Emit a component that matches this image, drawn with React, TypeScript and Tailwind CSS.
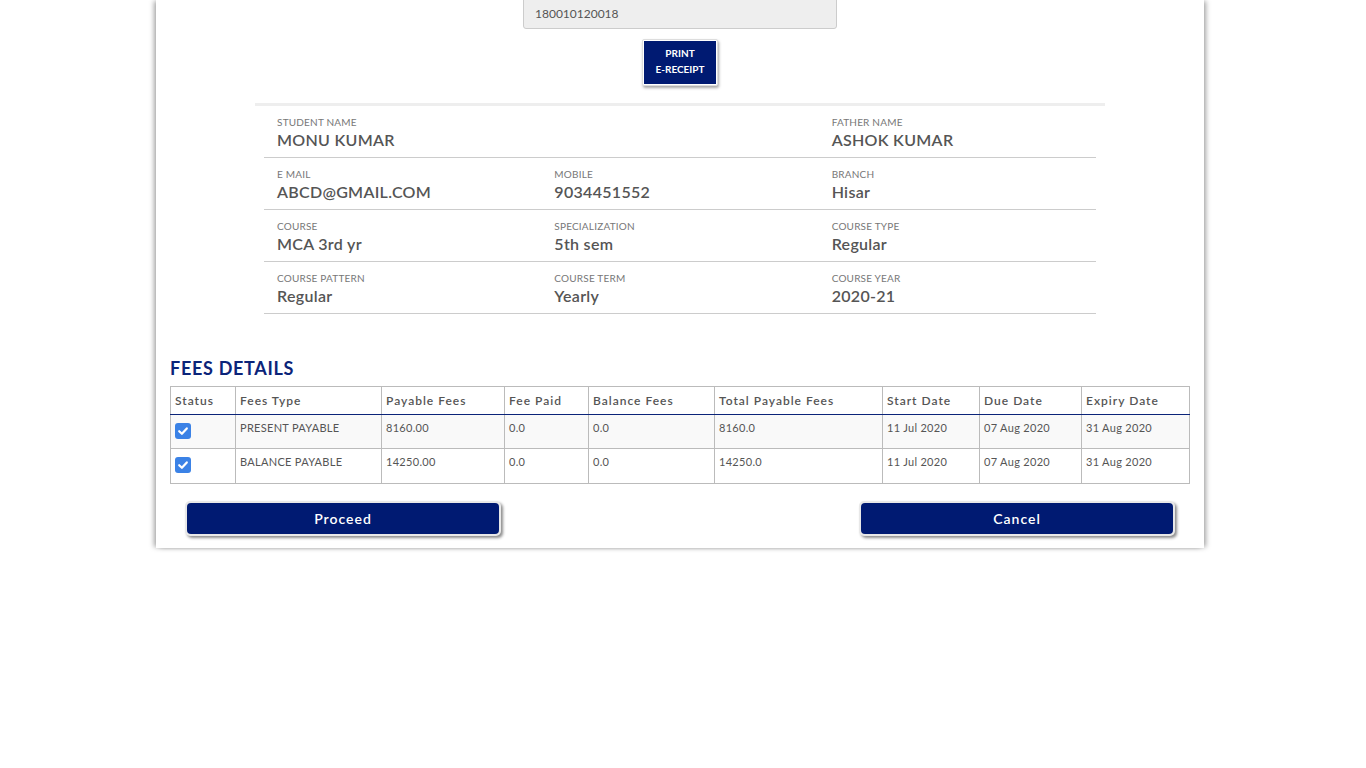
import React from "react";

const font = { fontFamily: "Lato, 'Open Sans', 'Liberation Sans', sans-serif" };

function Field({ label, value }: { label: string; value: string }) {
  return (
    <div className="pl-[13px] pt-[10px] pb-[6px]">
      <div className="text-[10px] leading-[13px] text-[#777] uppercase tracking-[0.2px]">{label}</div>
      <div className="text-[16px] leading-[22px] font-semibold text-[#555] tracking-[0.3px]">{value}</div>
    </div>
  );
}

function Check() {
  return (
    <span className="flex w-[16px] h-[16px] rounded-[3px] bg-[#3b82e6] items-center justify-center">
      <svg width="12" height="12" viewBox="0 0 12 12">
        <path d="M2.2 6.2 L4.9 8.8 L9.8 3.4" fill="none" stroke="white" strokeWidth="2.2" strokeLinecap="round" strokeLinejoin="round" />
      </svg>
    </span>
  );
}

const cols = [65, 146, 123, 84, 126, 168, 97, 102, 108];
const heads = ["Status", "Fees Type", "Payable Fees", "Fee Paid", "Balance Fees", "Total Payable Fees", "Start Date", "Due Date", "Expiry Date"];
const rows = [
  ["PRESENT PAYABLE", "8160.00", "0.0", "0.0", "8160.0", "11 Jul 2020", "07 Aug 2020", "31 Aug 2020"],
  ["BALANCE PAYABLE", "14250.00", "0.0", "0.0", "14250.0", "11 Jul 2020", "07 Aug 2020", "31 Aug 2020"],
];

export default function App() {
  return (
    <div className="min-h-[768px] bg-white overflow-hidden" style={font}>
      <div className="ml-[156px] w-[1048px] bg-white shadow-[-3px_0_5px_-1px_rgba(0,0,0,0.35),3px_0_5px_-1px_rgba(0,0,0,0.35)] px-[14px] pb-[12px]">
        <div className="flex flex-col items-center">
          <div className="-mt-[6px] w-[314px] h-[35px] rounded-[3px] border border-[#ccc] bg-[#eeeeee] flex items-center pl-[11px] pt-[5px] text-[12px] text-[#555]">
            180010120018
          </div>
          <button className="mt-[10px] w-[76px] h-[47px] bg-white border border-[#ddd] rounded-[2px] shadow-[1px_2px_3px_rgba(0,0,0,0.35)] p-[1px] flex">
            <span className="flex-1 bg-[#001a72] flex flex-col items-center justify-start pt-[4px] text-white text-[10px] font-bold leading-[16px]">
              <span>PRINT</span>
              <span>E-RECEIPT</span>
            </span>
          </button>
        </div>

        <div className="mt-[17px] mx-[85px] border-t-[3px] border-[#eeeeee]">
          <div className="mx-[9px]">
            <div className="grid grid-cols-3 border-b border-[#cccccc]">
              <Field label="Student Name" value="MONU KUMAR" />
              <div />
              <Field label="Father Name" value="ASHOK KUMAR" />
            </div>
            <div className="grid grid-cols-3 border-b border-[#cccccc]">
              <Field label="E Mail" value="ABCD@GMAIL.COM" />
              <Field label="Mobile" value="9034451552" />
              <Field label="Branch" value="Hisar" />
            </div>
            <div className="grid grid-cols-3 border-b border-[#cccccc]">
              <Field label="Course" value="MCA 3rd yr" />
              <Field label="Specialization" value="5th sem" />
              <Field label="Course Type" value="Regular" />
            </div>
            <div className="grid grid-cols-3 border-b border-[#cccccc]">
              <Field label="Course Pattern" value="Regular" />
              <Field label="Course Term" value="Yearly" />
              <Field label="Course Year" value="2020-21" />
            </div>
          </div>
        </div>

        <div className="mt-[43px] text-[18px] leading-[22px] font-bold text-[#0b2479] tracking-[0.7px]">FEES DETAILS</div>

        <table className="mt-[7px] border-collapse w-[1020px] table-fixed">
          <colgroup>
            {cols.map((w, i) => (
              <col key={i} style={{ width: w }} />
            ))}
          </colgroup>
          <thead>
            <tr className="h-[28px]">
              {heads.map((h) => (
                <th key={h} className="border border-[#bbbbbb] border-b-[#0b2479] text-left pl-[4px] text-[12px] font-semibold text-[#555] tracking-[1px]">
                  {h}
                </th>
              ))}
            </tr>
          </thead>
          <tbody>
            {rows.map((r, ri) => (
              <tr key={ri} className={ri === 0 ? "bg-[#f9f9f9] h-[34px]" : "bg-white h-[35px]"}>
                <td className="border border-[#bbbbbb] align-top pl-[4px]">
                  <div className="pt-[8px]">
                    <Check />
                  </div>
                </td>
                {r.map((c, ci) => (
                  <td key={ci} className="border border-[#bbbbbb] align-top pl-[4px] pt-[6px] text-[11px] leading-[14px] text-[#555] tracking-[0.3px]">
                    {c}
                  </td>
                ))}
              </tr>
            ))}
          </tbody>
        </table>

        <div className="mt-[17px] flex justify-between px-[15px] w-[1020px]">
          {["Proceed", "Cancel"].map((t) => (
            <button key={t} className="w-[316px] h-[35px] rounded-[5px] bg-[#e8e8e8] p-[2px] shadow-[2px_2px_3px_rgba(0,0,0,0.45)] flex">
              <span className="flex-1 rounded-[4px] bg-[#001a72] text-white text-[14px] font-semibold tracking-[1px] flex items-center justify-center">
                {t}
              </span>
            </button>
          ))}
        </div>
      </div>
    </div>
  );
}
